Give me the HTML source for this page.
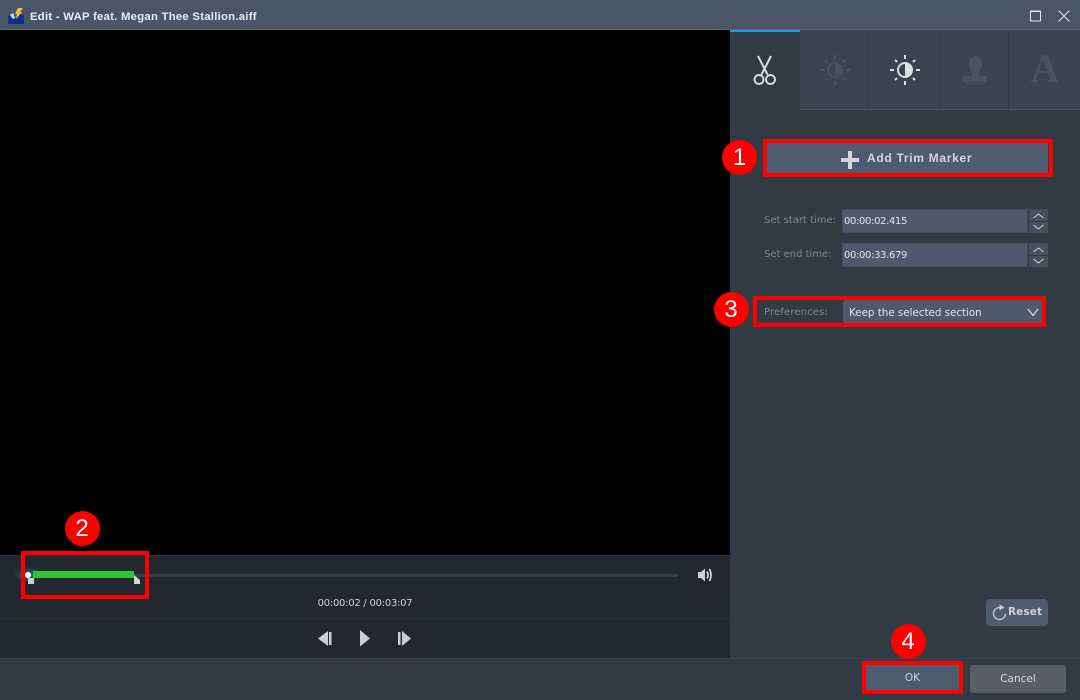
<!DOCTYPE html>
<html><head><meta charset="utf-8">
<style>
html,body{margin:0;padding:0;background:#323a44}
#p{position:relative;width:1080px;height:700px;overflow:hidden;background:#323a44;font-family:"DejaVu Sans","Liberation Sans",sans-serif;font-size:10px;color:#d5d9de}
#p div{position:absolute;box-sizing:border-box;white-space:nowrap}
.lab{color:#7f8790;font-size:10px;line-height:14px}
.fld{background:#4e5a6c;height:24px;left:842px;width:186px;border:1px solid #434e5d;color:#e2e5e9;font-size:10px;line-height:23px;padding-left:1px;letter-spacing:-.35px}
.sp{left:1029px;width:19px;height:12px;background:#46515f}
.red{border:4px solid #fe0000}
.c{width:35px;height:35px;border-radius:50%;background:#fe0000;color:#fff;text-align:center;font:24px/35px "Liberation Sans",sans-serif}
.tab{top:30px;height:80px;background:#3a4450;border-bottom:1px solid #4e5a6a;border-right:1px solid #323b47}
svg{position:absolute;overflow:visible}
</style></head><body><div id="p">

<div style="left:0;top:0;width:1080px;height:30px;background:#4a5565;border-bottom:1px solid #5b6676"></div>
<svg style="left:7px;top:7px" width="18" height="18" viewBox="0 0 18 18">
<path d="M1 9L5 7L9 12L13 7L17 8L17 17L1 17Z" fill="#0d2fa8"/><path d="M2 12H16V17H2Z" fill="#102a80"/>
<path d="M11 1L16 1L13 5L15 5L9 12L10 7L8 7Z" fill="#f4c430"/><path d="M3 8L6 6L8 11L6 12Z" fill="#cfe2f5"/></svg>
<div style="left:30px;top:10px;font:bold 11.3px/15px 'Liberation Sans',sans-serif;color:#e3eef8;letter-spacing:.27px">Edit - WAP feat. Megan Thee Stallion.aiff</div>
<svg style="left:1030px;top:10px" width="11" height="11"><rect x=".5" y="1" width="10" height="10" fill="none" stroke="#e4e7ea" stroke-width="1"/><rect x="0" y=".5" width="11" height="1.5" fill="#e4e7ea"/></svg>
<svg style="left:1058px;top:10px" width="12" height="12"><path d="M.5.5L11.500 11.500M11.500.5L.5 11.500" stroke="#e4e7ea" stroke-width="1"/></svg>

<div style="left:0;top:30px;width:730px;height:525px;background:#000"></div>

<!-- tabs -->
<div style="left:730px;top:30px;width:70px;height:2px;background:#1f9ee0"></div>
<div class="tab" style="left:800px;width:69px"></div>
<div class="tab" style="left:869px;width:71px"></div>
<div class="tab" style="left:940px;width:69px"></div>
<div class="tab" style="left:1009px;width:71px;border-right:0"></div>

<svg style="left:750px;top:50px" width="30" height="40" viewBox="0 0 30 40" fill="none">
<path d="M8 6L17.500 24.500M21 6L11.500 24.500" stroke="#d8dadd" stroke-width="2"/>
<circle cx="9" cy="29.500" r="4.500" stroke="#d8dadd" stroke-width="1.900"/><circle cx="20.500" cy="29.500" r="4.500" stroke="#d8dadd" stroke-width="1.900"/></svg>

<svg style="left:820px;top:55px" width="32" height="32" viewBox="0 0 32 32">
<g stroke="#4a5461" stroke-width="2" fill="none"><path d="M15 0V4M15 26V30M0 15H4M26 15H30M5 5L7 7M25 5L23 7M5 25L7 23M25 25L23 23"/><circle cx="15" cy="15" r="7"/></g><path d="M15 8A7 7 0 0 1 15 22Z" fill="#4a5461"/></svg>

<svg style="left:890px;top:55px" width="32" height="32" viewBox="0 0 32 32">
<g stroke="#dcdee1" stroke-width="2" fill="none"><path d="M15 0V4M15 26V30M0 15H4M26 15H30M5 5L7 7M25 5L23 7M5 25L7 23M25 25L23 23"/><circle cx="15" cy="15" r="7"/></g><path d="M15 8A7 7 0 0 1 15 22Z" fill="#dcdee1"/></svg>

<svg style="left:962px;top:54px" width="28" height="32" viewBox="0 0 28 32">
<path d="M10 22C10 18 7 15 7 9A6.500 6.500 0 0 1 20 9C20 15 17 18 17 22Z" fill="#4a5461"/><rect x="1" y="22" width="24" height="6" fill="#4a5461"/><rect x="3" y="29" width="20" height="1" fill="#4a5461"/></svg>
<div style="left:1029px;top:46px;width:32px;text-align:center;font:bold 40px/46px 'Liberation Serif',serif;color:#4a5461">A</div>

<!-- add trim -->
<div class="red" style="left:763px;top:139px;width:290px;height:38px"></div>
<div style="left:767px;top:143px;width:281px;height:30px;background:#4f5b6e"></div>
<svg style="left:841px;top:151px" width="18" height="18"><path d="M7 0H11V7H18V11H11V18H7V11H0V7H7Z" fill="#d3d6da"/></svg>
<div style="left:867px;top:151px;font:bold 12px/15px 'Liberation Sans',sans-serif;color:#d3d6da;letter-spacing:.7px">Add Trim Marker</div>
<div class="c" style="left:722px;top:140px">1</div>

<!-- fields -->
<div class="lab" style="left:764px;top:214px">Set start time:</div>
<div class="fld" style="top:209px">00:00:02.415</div>
<div class="sp" style="top:209px"></div><div class="sp" style="top:222px;height:11px"></div>
<svg style="left:1032px;top:212px" width="13" height="20" fill="none" stroke="#cfd3d8"><path d="M1.500 6L6.500 2L11.500 6M1.500 13L6.500 17L11.500 13"/></svg>
<div class="lab" style="left:764px;top:248px">Set end time:</div>
<div class="fld" style="top:243px">00:00:33.679</div>
<div class="sp" style="top:243px"></div><div class="sp" style="top:256px;height:11px"></div>
<svg style="left:1032px;top:246px" width="13" height="20" fill="none" stroke="#cfd3d8"><path d="M1.500 6L6.500 2L11.500 6M1.500 13L6.500 17L11.500 13"/></svg>

<!-- prefs -->
<div class="lab" style="left:764px;top:306px;letter-spacing:.15px">Preferences:</div>
<div style="left:843px;top:300px;width:199px;height:24px;background:#4e5a6c;border-radius:3px 0 0 3px;color:#dfe2e6;font-size:10.300px;line-height:26px;padding-left:6px">Keep the selected section</div>
<svg style="left:1027px;top:308px" width="12" height="9" fill="none" stroke="#d5d8dc" stroke-width="1.300"><path d="M1 1L6 7.500L11 1"/></svg>
<div class="red" style="left:753px;top:296px;width:293px;height:31px"></div>
<div class="c" style="left:713.500px;top:292px">3</div>

<!-- control bar -->
<div style="left:0;top:555px;width:730px;height:103px;background:#23282f;border-top:1px solid #2c323a"></div>
<div style="left:0;top:618px;width:730px;height:1px;background:#2b3038"></div>
<div style="left:20px;top:574px;width:658px;height:3px;background:#3a4049"></div>
<div style="left:18px;top:571px;width:20px;height:8px;border-radius:50%;background:#2f6f85;filter:blur(3px)"></div>
<div style="left:33px;top:571px;width:101px;height:7px;background:#30c431"></div>
<div style="left:28px;top:578px;width:6px;height:6px;background:#ccd0d4"></div>
<svg style="left:134px;top:575px" width="7" height="10"><path d="M0 0L6 5V9H0Z" fill="#d3d6d9"/></svg>
<div style="left:25px;top:572px;width:6px;height:6px;border-radius:50%;background:#fff"></div>
<div class="red" style="left:21px;top:551px;width:128px;height:48px"></div>
<div class="c" style="left:64.500px;top:511px">2</div>

<svg style="left:698px;top:567px" width="18" height="16" fill="none"><path d="M0 5H3L7 1.500V14.500L3 11H0Z" fill="#cdd0d4"/><path d="M9 4.500Q11 8 9 11.500M11.500 2Q14.500 8 11.500 14" stroke="#cdd0d4" stroke-width="1.800"/></svg>
<div style="left:265px;top:596px;width:200px;text-align:center;font-size:10px;line-height:15px;color:#cdd1d5;letter-spacing:-.25px">00:00:02 / 00:03:07</div>

<svg style="left:318px;top:631px" width="14" height="15"><path d="M10 0V15L0 7.500Z" fill="#c9ccd1"/><rect x="11" y="1" width="2.500" height="13" fill="#c9ccd1"/></svg>
<svg style="left:360px;top:630px" width="11" height="17"><path d="M0 0L10 8.500L0 16.500Z" fill="#c9ccd1"/></svg>
<svg style="left:398px;top:631px" width="14" height="15"><rect x="0" y="1" width="2.500" height="13" fill="#c9ccd1"/><path d="M4 0V15L13 7.500Z" fill="#c9ccd1"/></svg>

<!-- reset -->
<div style="left:986px;top:599px;width:62px;height:27px;background:#4f5b6e;border-radius:4px"></div>
<svg style="left:992px;top:605px" width="16" height="18" fill="none"><path d="M7.500 2.500A6 6 0 1 0 13.500 8.500" stroke="#b9bec4" stroke-width="1.500"/><path d="M7.500 -.5L12.500 2.500L7.500 5.500Z" fill="#c9cdd2"/></svg>
<div style="left:1008px;top:605px;font:bold 10.500px/14px 'DejaVu Sans',sans-serif;color:#cfd3d7;letter-spacing:.1px">Reset</div>

<!-- bottom -->
<div style="left:0;top:658px;width:1080px;height:1px;background:#3c4550"></div>
<div style="left:866px;top:665px;width:93px;height:25px;background:#4f5b6e"></div>
<div style="left:866px;top:665px;width:93px;height:27px;text-align:center;font-size:10.500px;line-height:27px;color:#d2d5d9">OK</div>
<div class="red" style="left:862px;top:661px;width:101px;height:33px"></div>
<div style="left:970px;top:665px;width:96px;height:28px;background:#5a5f66;border-radius:3px;text-align:center;font-size:10.500px;line-height:28px;color:#d2d5d9">Cancel</div>
<div class="c" style="left:890.500px;top:624px">4</div>

</div></body></html>
